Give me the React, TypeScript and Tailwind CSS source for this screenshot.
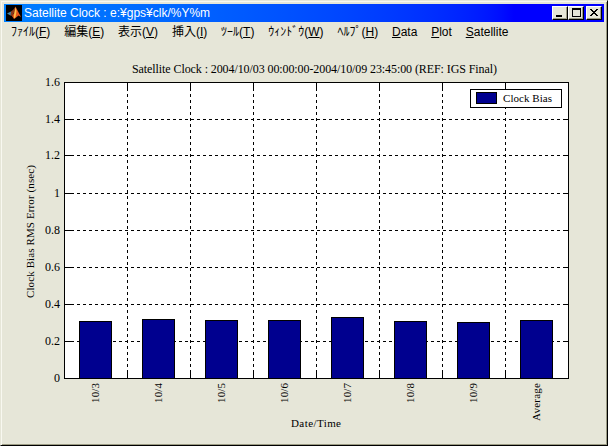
import React from "react";

const MENU = [
  { before: "ﾌｧｲﾙ(", hot: "F", after: ")" },
  { before: "編集(", hot: "E", after: ")" },
  { before: "表示(", hot: "V", after: ")" },
  { before: "挿入(", hot: "I", after: ")" },
  { before: "ﾂｰﾙ(", hot: "T", after: ")" },
  { before: "ｳｨﾝﾄﾞｳ(", hot: "W", after: ")" },
  { before: "ﾍﾙﾌﾟ(", hot: "H", after: ")" },
  { before: "", hot: "D", after: "ata" },
  { before: "", hot: "P", after: "lot" },
  { before: "", hot: "S", after: "atellite" },
];

// top = y of the bar's upper edge
const BARS = [
  { label: "10/3", top: 321 },
  { label: "10/4", top: 319 },
  { label: "10/5", top: 320 },
  { label: "10/6", top: 320 },
  { label: "10/7", top: 317 },
  { label: "10/8", top: 321 },
  { label: "10/9", top: 322 },
  { label: "Average", top: 320 },
];

const TICKS = [
  { label: "1.6", y: 82.5 },
  { label: "1.4", y: 119.5 },
  { label: "1.2", y: 155.5 },
  { label: "1", y: 193.5 },
  { label: "0.8", y: 230.5 },
  { label: "0.6", y: 267.5 },
  { label: "0.4", y: 304.5 },
  { label: "0.2", y: 341.5 },
  { label: "0", y: 378.5 },
];

const LEFT = 64.5;
const RIGHT = 568.5;
const TOP = 82.5;
const BOTTOM = 378.5;
const STEP_X = 63;

const MatlabIcon: React.FC = () => (
  <svg width="16" height="16" viewBox="0 0 16 16" className="shrink-0">
    <rect width="16" height="16" fill="#000" />
    <path d="M1 8.5 L5 6.5 L7 8 L4.5 10.5 Z" fill="#3f86a8" />
    <path d="M5 6.5 L7.5 4.5 L9.5 1.5 L8.5 7 L6 11 L4.5 10.5 Z" fill="#8c3a1c" />
    <path d="M9.5 1.5 L11 4.5 L15 12 L12.5 10.5 L9.5 13 L8 14 L6 11 L8.2 8 Z" fill="#e8581c" />
    <path d="M9.5 2 L10.5 6 L9.5 12 L8 13.5 L8 10 Z" fill="#ffc24a" />
  </svg>
);

const CaptionButton: React.FC<{ children: React.ReactNode; className?: string }> = ({
  children,
  className = "",
}) => (
  <button
    className={`block w-4 h-[14px] bg-[#e6e6d8] border border-t-white border-l-white border-r-black border-b-black shadow-[inset_-1px_-1px_0_#9c9c84] ${className}`}
  >
    <svg width="14" height="12" viewBox="0 0 14 12" shapeRendering="crispEdges">
      {children}
    </svg>
  </button>
);

const Chart: React.FC = () => (
  <svg
    width="606"
    height="402"
    viewBox="1 42 606 402"
    className="block font-['Liberation_Serif',serif] text-[12px]"
  >
    <g shapeRendering="crispEdges" stroke="#000" fill="none">
      <rect x={LEFT} y={TOP} width={RIGHT - LEFT} height={BOTTOM - TOP} fill="#fff" />

      {/* GRID */}
      {TICKS.slice(1, -1).map(tick => (
        <g key={tick.label}>
          <path d={`M${LEFT} ${tick.y}H${RIGHT}`} strokeDasharray="3 3" />
          <path d={`M${LEFT} ${tick.y}h6M${RIGHT} ${tick.y}h-6`} />
        </g>
      ))}
      {BARS.slice(1).map((bar, i) => {
        const x = LEFT + (i + 1) * STEP_X;
        return (
          <g key={bar.label}>
            <path d={`M${x} ${BOTTOM}V${TOP}`} strokeDasharray="3 3" />
            <path d={`M${x} ${TOP}v6M${x} ${BOTTOM}v-6`} />
          </g>
        );
      })}

      {/* BARS */}
      {BARS.map((bar, i) => (
        <rect
          key={bar.label}
          x={LEFT + i * STEP_X + 15}
          y={bar.top + 0.5}
          width={32}
          height={BOTTOM - bar.top - 0.5}
          fill="#00008f"
        />
      ))}

      {/* LEGEND */}
      <rect x="470.5" y="89.5" width="91" height="18" fill="#fff" />
      <rect x="476.5" y="92.5" width="20" height="11" fill="#00008f" />
    </g>

    <text x="132" y="73" textLength="365">
      Satellite Clock : 2004/10/03 00:00:00-2004/10/09 23:45:00 (REF: IGS Final)
    </text>
    <text x="503" y="102" fontSize="11" textLength="49">
      Clock Bias
    </text>
    {TICKS.map(tick => (
      <text key={tick.label} x="60" y={tick.y + 3.5} textAnchor="end">
        {tick.label}
      </text>
    ))}
    {BARS.map((bar, i) => (
      <text
        key={bar.label}
        transform={`translate(${LEFT + i * STEP_X + 34} 383) rotate(-90)`}
        textAnchor="end"
        fontSize="11"
        textLength={bar.label === "Average" ? 38 : 20}
      >
        {bar.label}
      </text>
    ))}
    <text transform="translate(34 298) rotate(-90)" fontSize="11" textLength="133">
      Clock Bias RMS Error (nsec)
    </text>
    <text x="291" y="427" fontSize="11" textLength="50">
      Date/Time
    </text>
  </svg>
);

const App: React.FC = () => {
  return (
    <div className="w-[608px] h-[446px] overflow-hidden bg-[#e6e6d8] text-black font-['Liberation_Sans','Noto_Sans_CJK_JP',sans-serif] text-[12px] border border-t-[#e6e6d8] border-l-[#e6e6d8] border-r-black border-b-black shadow-[inset_1px_1px_0_#f8f8f0,inset_-1px_-1px_0_#9c9c84]">
      {/* TITLE BAR */}
      <div className="pt-[3px] px-[3px]">
        <div className="w-[600px] h-[18px] px-0.5 flex items-center bg-linear-to-r from-[#0080ff] to-[#0000ff] to-85%">
          <MatlabIcon />
          <span className="ml-0.5 leading-[18px] text-white whitespace-nowrap">
            Satellite Clock : e:¥gps¥clk/%Y%m
          </span>
          <div className="ml-auto flex">
            <CaptionButton>
              <path d="M3 8h6v2H3z" />
            </CaptionButton>
            <CaptionButton>
              <path d="M3 1h9v9H3zM4 3v6h7V3z" fillRule="evenodd" />
            </CaptionButton>
            <CaptionButton className="ml-0.5">
              <path d="M3 2h2v1h1v1h2V3h1V2h2v1h-1v1H9v1H8v1h1v1h1v1h1v1H9V8H8V7H6v1H5v1H3V8h1V7h1V6h1V5H5V4H4V3H3z" />
            </CaptionButton>
          </div>
        </div>
      </div>

      {/* MENU */}
      <div className="h-5 pl-2.5 flex items-center gap-[13.85px] leading-5 whitespace-nowrap">
        {MENU.map(item => (
          <span key={item.hot}>
            {item.before}
            <span className="underline underline-offset-1">{item.hot}</span>
            {item.after}
          </span>
        ))}
      </div>

      <Chart />
    </div>
  );
};

export default App;
